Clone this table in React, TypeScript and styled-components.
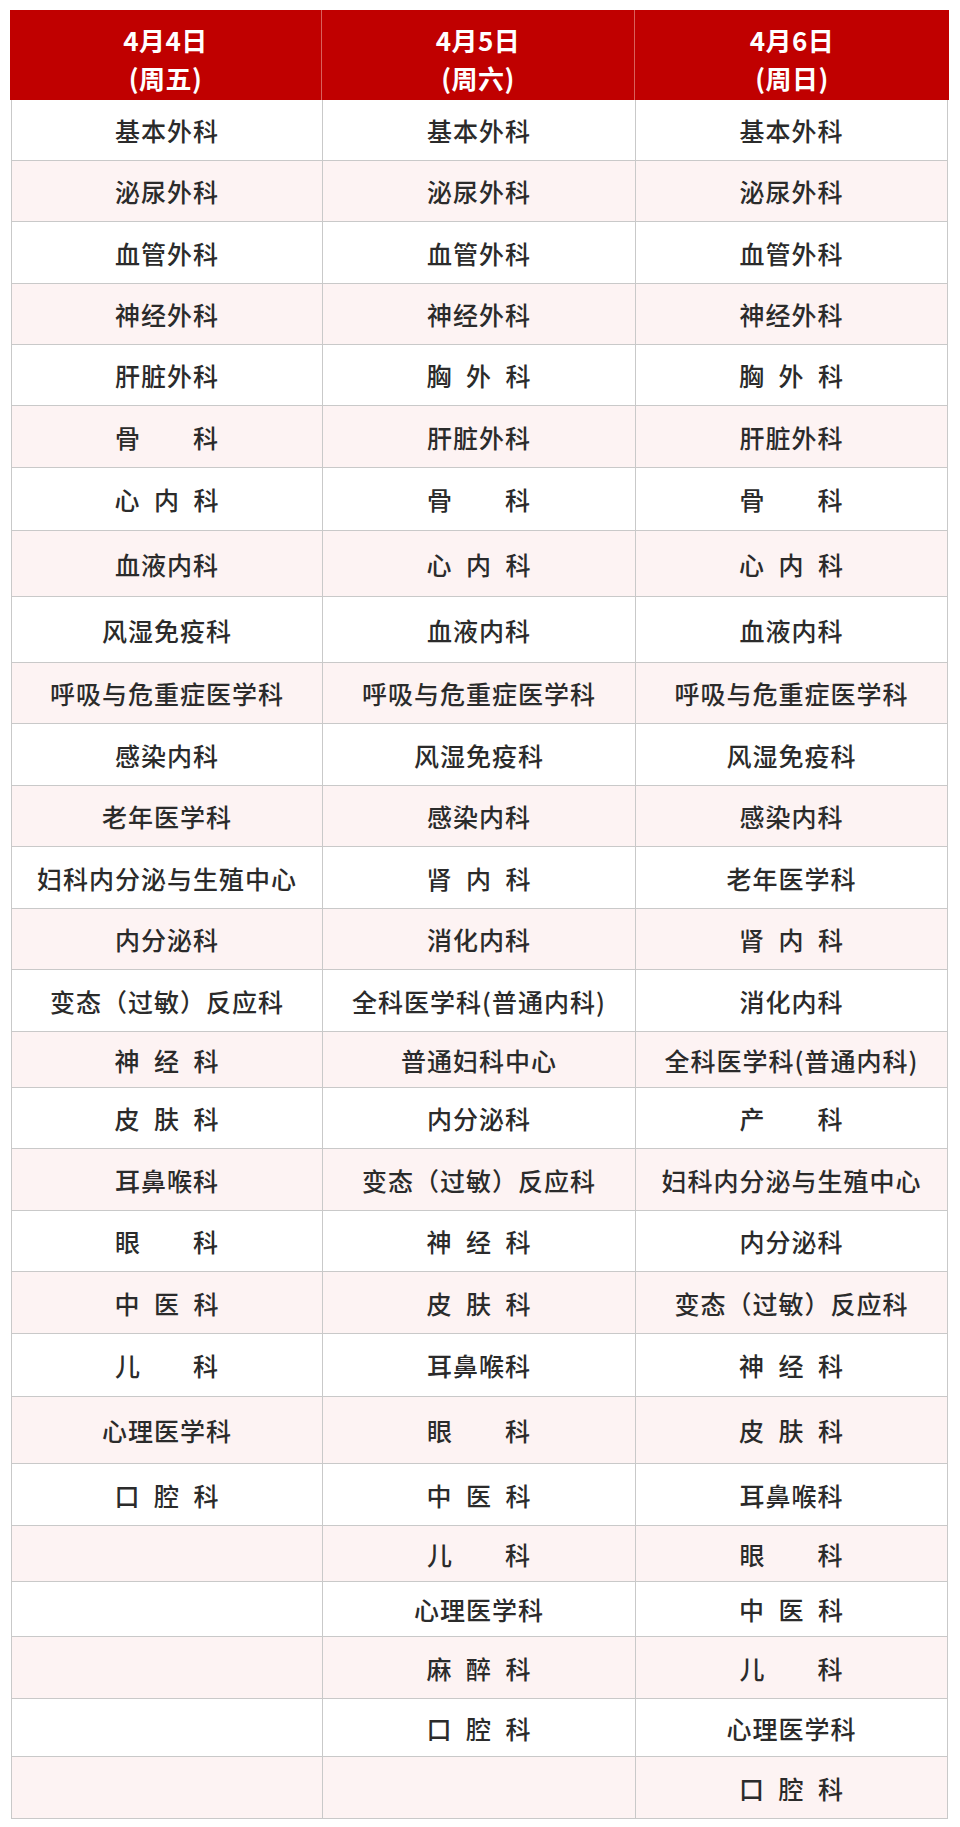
import * as React from 'react'
import styled, { createGlobalStyle } from 'styled-components'

const GlobalStyle = createGlobalStyle`
  html, body {
    margin: 0;
    padding: 0;
    background: #fff;
  }
  body {
    font-family: "Noto Sans CJK SC", "Noto Sans", sans-serif;
  }
`

const Page = styled.div`
  padding: 10px 12px 9px 11px;
  width: 960px;
  box-sizing: border-box;
`

const Table = styled.div`
  border: 1px solid #c9c9c9;
  border-top: none;
`

const HeaderRow = styled.div`
  display: grid;
  grid-template-columns: 312px 313px 1fr;
  height: 90px;
  background: #c00000;
  margin: 0 -1px;
`

const HeaderCell = styled.div<{ $last?: boolean }>`
  display: flex;
  align-items: center;
  justify-content: center;
  padding-top: 7px;
  color: #fff;
  font-weight: 700;
  font-size: 26px;
  line-height: 38px;
  letter-spacing: 0.5px;
  text-align: center;
  border-right: ${p => (p.$last ? 'none' : '1px solid #d9605a')};
`

const Row = styled.div<{ $striped: boolean }>`
  display: grid;
  grid-template-columns: 311px 313px 1fr;
  box-sizing: border-box;
  border-bottom: 1px solid #c9c9c9;
  background: ${p => (p.$striped ? '#fdf3f3' : '#fff')};
  &:last-child {
    border-bottom: none;
  }
`

const Cell = styled.div<{ $last?: boolean }>`
  display: flex;
  align-items: center;
  justify-content: center;
  color: #2b2b2b;
  font-size: 25px;
  font-weight: 500;
  letter-spacing: 1px;
  white-space: pre;
  border-right: ${p => (p.$last ? 'none' : '1px solid #c9c9c9')};
`

const heads = [
  ['4月4日', '(周五)'],
  ['4月5日', '(周六)'],
  ['4月6日', '(周日)']
]

const E = '\u2002'
const W = '\u3000\u3000'

const day1 = [
  '基本外科', '泌尿外科', '血管外科', '神经外科', '肝脏外科', `骨${W}科`,
  `心${E}内${E}科`, '血液内科', '风湿免疫科', '呼吸与危重症医学科', '感染内科',
  '老年医学科', '妇科内分泌与生殖中心', '内分泌科', '变态（过敏）反应科',
  `神${E}经${E}科`, `皮${E}肤${E}科`, '耳鼻喉科', `眼${W}科`, `中${E}医${E}科`,
  `儿${W}科`, '心理医学科', `口${E}腔${E}科`
]

const day2 = [
  '基本外科', '泌尿外科', '血管外科', '神经外科', `胸${E}外${E}科`, '肝脏外科',
  `骨${W}科`, `心${E}内${E}科`, '血液内科', '呼吸与危重症医学科', '风湿免疫科',
  '感染内科', `肾${E}内${E}科`, '消化内科', '全科医学科(普通内科)', '普通妇科中心',
  '内分泌科', '变态（过敏）反应科', `神${E}经${E}科`, `皮${E}肤${E}科`, '耳鼻喉科',
  `眼${W}科`, `中${E}医${E}科`, `儿${W}科`, '心理医学科', `麻${E}醉${E}科`,
  `口${E}腔${E}科`
]

const day3 = [
  '基本外科', '泌尿外科', '血管外科', '神经外科', `胸${E}外${E}科`, '肝脏外科',
  `骨${W}科`, `心${E}内${E}科`, '血液内科', '呼吸与危重症医学科', '风湿免疫科',
  '感染内科', '老年医学科', `肾${E}内${E}科`, '消化内科', '全科医学科(普通内科)',
  `产${W}科`, '妇科内分泌与生殖中心', '内分泌科', '变态（过敏）反应科',
  `神${E}经${E}科`, `皮${E}肤${E}科`, '耳鼻喉科', `眼${W}科`, `中${E}医${E}科`,
  `儿${W}科`, '心理医学科', `口${E}腔${E}科`
]

// measured row heights (px), border included
const heights = [
  61, 61, 62, 61, 61, 62, 63, 66, 66, 61, 62, 61, 62, 61, 62, 56, 61, 62, 61,
  62, 63, 67, 62, 56, 55, 62, 58, 61
]

const App: React.FC = () => (
  <Page>
    <GlobalStyle />
    <HeaderRow>
      {heads.map((h, i) => (
        <HeaderCell key={i} $last={i === 2}>
          <div>
            {h[0]}
            <br />
            {h[1]}
          </div>
        </HeaderCell>
      ))}
    </HeaderRow>
    <Table>
      {heights.map((h, i) => (
        <Row key={i} $striped={i % 2 === 1} style={{ height: h }}>
          <Cell>{day1[i] || ''}</Cell>
          <Cell>{day2[i] || ''}</Cell>
          <Cell $last>{day3[i] || ''}</Cell>
        </Row>
      ))}
    </Table>
  </Page>
)

export default App
